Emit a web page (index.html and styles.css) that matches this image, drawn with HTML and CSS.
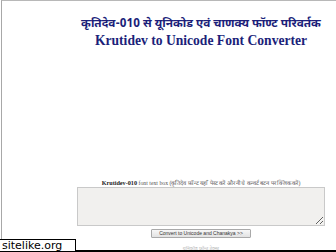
FILE: index.html
```html
<!DOCTYPE html>
<html lang="hi">
<head>
<meta charset="utf-8">
<title>Krutidev to Unicode Font Converter</title>
<link rel="stylesheet" href="styles.css">
</head>
<body>
<div class="page">
  <div class="main">
    <h1 class="title-hi">कृतिदेव-010 से यूनिकोड एवं चाणक्य फॉण्ट परिवर्तक</h1>
    <h2 class="title-en">Krutidev to Unicode Font Converter</h2>
    <div class="tool">
      <div class="label"><b>Krutidev-010</b> font text box (कृतिदेव फ़ॉन्ट यहाँ पेस्ट करें और नीचे कन्वर्ट बटन पर क्लिक करें)</div>
      <textarea class="box"></textarea>
      <button class="btn">Convert to Unicode and Chanakya &gt;&gt;</button>
      <div class="faint">यूनिकोड फ़ॉन्ट टेक्स्ट</div>
    </div>
  </div>
</div>
<div class="badge-bar"><span class="badge">sitelike.org</span></div>
</body>
</html>
```
FILE: styles.css
```css
html, body {
  margin: 0;
  padding: 0;
  background: #fff;
  overflow: hidden;
}
body {
  width: 336px;
  height: 252px;
  position: relative;
}
.page {
  margin-left: 1px;
  height: 252px;
  border-left: 1px solid #a8a8a8;
  border-top: 1px solid #b8b8b8;
  box-sizing: border-box;
  display: flex;
}
.main {
  margin-left: 64px;
  width: 270px;
  display: flex;
  flex-direction: column;
  align-items: center;
}
.title-hi {
  margin: 15px 0 0 0;
  font-family: "Noto Sans Devanagari", "Noto Serif Devanagari", "Noto Sans", serif;
  font-size: 11.8px;
  line-height: 17px;
  font-weight: bold;
  color: #1c1f7a;
  white-space: nowrap;
}
.title-en {
  margin: 1px 0 0 0;
  font-family: "Liberation Serif", serif;
  font-size: 13.6px;
  line-height: 14px;
  font-weight: bold;
  color: #1c1f7a;
  white-space: nowrap;
}
.tool {
  margin-top: 131px;
  display: flex;
  flex-direction: column;
  align-items: center;
}
.label {
  font-family: "Liberation Serif", serif;
  font-size: 5.8px;
  line-height: 7px;
  color: #555;
  white-space: nowrap;
  margin-left: 0;
}
.label b {
  color: #222;
  font-size: 6.2px;
}
.box {
  display: block;
  width: 248px;
  height: 39px;
  margin: 0;
  padding: 0;
  box-sizing: border-box;
  background: #f1f0ee;
  border: 1px solid #c9c9c9;
  resize: both;
}
.btn {
  margin-top: 3px;
  width: 100px;
  height: 9px;
  padding: 0;
  box-sizing: border-box;
  font-family: "Liberation Sans", sans-serif;
  font-size: 5px;
  line-height: 7px;
  color: #333;
  background: linear-gradient(#f7f7f7, #e2e2e2);
  border: 1px solid #a9a9a9;
  border-radius: 1px;
}
.faint {
  margin-top: 8px;
  font-family: "Noto Sans Devanagari", "Noto Sans", sans-serif;
  font-size: 5px;
  line-height: 6px;
  color: #bbb;
}
.badge-bar {
  position: absolute;
  left: 0;
  right: 0;
  bottom: 0;
  height: 12px;
  border-bottom: 2px solid #000;
}
.badge {
  position: absolute;
  left: 0;
  bottom: -2px;
  width: 76px;
  height: 13px;
  box-sizing: border-box;
  background: #fff;
  border: 1px solid #000;
  border-left: none;
  font-family: "DejaVu Sans", sans-serif;
  font-size: 11px;
  line-height: 11px;
  padding-left: 2px;
  color: #000;
}
```
